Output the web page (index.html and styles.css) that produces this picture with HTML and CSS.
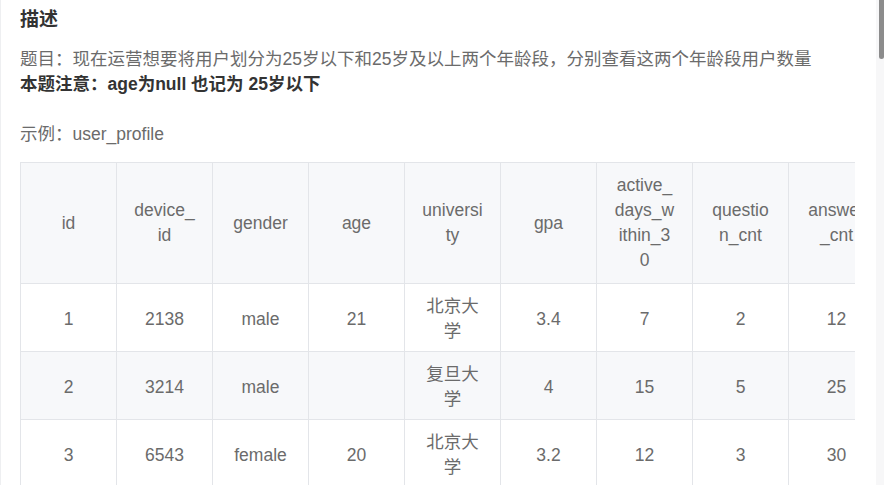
FILE: index.html
```html
<!DOCTYPE html>
<html lang="zh-CN">
<head>
<meta charset="utf-8">
<title>描述</title>
<link rel="stylesheet" href="styles.css">
</head>
<body>
<div class="page">
  <main class="content">
    <h2 class="title">描述</h2>
    <p class="desc">题目：现在运营想要将用户划分为25岁以下和25岁及以上两个年龄段，分别查看这两个年龄段用户数量</p>
    <p class="desc strong">本题注意：age为null 也记为 25岁以下</p>
    <p class="desc blank">&nbsp;</p>
    <p class="desc">示例：user_profile</p>
    <div class="table-wrap">
      <table class="data">
        <thead>
          <tr>
            <th>id</th>
            <th>device_id</th>
            <th>gender</th>
            <th>age</th>
            <th>university</th>
            <th>gpa</th>
            <th>active_days_within_30</th>
            <th>question_cnt</th>
            <th>answer_cnt</th>
          </tr>
        </thead>
        <tbody>
          <tr>
            <td>1</td><td>2138</td><td>male</td><td>21</td><td>北京大学</td><td>3.4</td><td>7</td><td>2</td><td>12</td>
          </tr>
          <tr class="stripe">
            <td>2</td><td>3214</td><td>male</td><td></td><td>复旦大学</td><td>4</td><td>15</td><td>5</td><td>25</td>
          </tr>
          <tr>
            <td>3</td><td>6543</td><td>female</td><td>20</td><td>北京大学</td><td>3.2</td><td>12</td><td>3</td><td>30</td>
          </tr>
        </tbody>
      </table>
    </div>
  </main>
  <div class="scrollbar"><div class="thumb"></div></div>
</div>
</body>
</html>
```

FILE: styles.css
```css
html, body {
  margin: 0;
  padding: 0;
  background: #ffffff;
  height: 100%;
  overflow: hidden;
}

body {
  font-family: "Liberation Sans", "Noto Sans CJK SC", sans-serif;
  color: #666666;
}

.page {
  display: flex;
  height: 485px;
}

.content {
  flex: 1;
  min-width: 0;
  padding: 7px 21px 0 19px;
  border-left: 1px solid #eeeff1;
  overflow: hidden;
}

.title {
  margin: 0 0 15px;
  font-size: 19px;
  line-height: 25px;
  font-weight: bold;
  color: #333333;
}

.desc {
  margin: 0;
  font-size: 17.5px;
  line-height: 25px;
  color: #6b6b6b;
}

.desc.strong {
  font-weight: bold;
  color: #333333;
}

.table-wrap {
  margin-top: 15px;
  overflow: hidden;
}

.data {
  border-collapse: collapse;
  table-layout: fixed;
  width: 865px;
  font-size: 17.5px;
  line-height: 25px;
  color: #6b6b6b;
}

.data th,
.data td {
  box-sizing: border-box;
  width: 96px;
  border: 1px solid #e3e5e9;
  text-align: center;
  vertical-align: middle;
  word-break: break-all;
  font-weight: normal;
}

.data th {
  padding: 10px 17.1px;
  background: #f7f8fa;
}

.data td {
  padding: 10px 17.1px 7px;
}

.data tr.stripe td {
  background: #f7f8fa;
}

.scrollbar {
  flex: 0 0 8px;
  background: #f7f7f8;
  display: flex;
  justify-content: flex-end;
}

.thumb {
  width: 5px;
  height: 59px;
  background: #8c8c8c;
  border-radius: 0 0 3px 3px;
}
```
